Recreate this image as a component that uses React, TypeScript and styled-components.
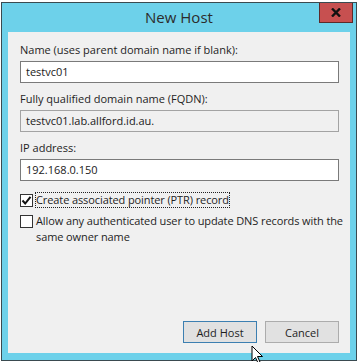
import React from 'react';
import styled, { createGlobalStyle } from 'styled-components';

const GlobalStyle = createGlobalStyle`
  html, body {
    margin: 0;
    padding: 0;
    background: #ffffff;
  }
  body {
    font-family: "Segoe UI", "Open Sans", "Noto Sans", sans-serif;
    font-size: 11px;
    color: #000;
  }
`;

const Page = styled.div`
  position: relative;
  width: 359px;
  height: 362px;
  overflow: hidden;
  padding: 2px 0 0 1px;
  box-sizing: border-box;
`;

const Window = styled.div`
  width: 356px;
  height: 359px;
  box-sizing: border-box;
  border: 1px solid #3a4a50;
  background: #6dd1ea;
  padding: 0 6px 7px;
  display: flex;
  flex-direction: column;
`;

const TitleBar = styled.div`
  height: 29px;
  display: grid;
  grid-template-columns: 1fr auto 1fr;
  align-items: start;
  margin: 0 -6px;
`;

const Title = styled.div`
  grid-column: 2;
  font-size: 15px;
  line-height: 29px;
  color: #2c2c2c;
`;

const CloseButton = styled.div`
  grid-column: 3;
  justify-self: end;
  margin-right: 3px;
  width: 34px;
  height: 20px;
  box-sizing: border-box;
  background: #c75050;
  border: 1px solid #5c2a2a;
  border-top: none;
  display: flex;
  align-items: center;
  justify-content: center;
`;

const Client = styled.div`
  flex: 1;
  background: #f0f0f0;
  padding: 10px 11px 10px 12px;
  display: flex;
  flex-direction: column;
`;

const Field = styled.div`
  display: flex;
  flex-direction: column;
  gap: 3px;
  margin-bottom: 8px;
`;

const Label = styled.div`
  line-height: 16px;
  color: #1e1e1e;
`;

const TextBox = styled.div<{ $disabled?: boolean }>`
  height: 22px;
  box-sizing: border-box;
  border: 1px solid ${p => (p.$disabled ? '#a3a3a3' : '#7a7a7a')};
  background: ${p => (p.$disabled ? '#f0f0f0' : '#ffffff')};
  padding: 0 5px;
  line-height: 20px;
  color: #1a1a1a;
`;

const CheckRow = styled.div`
  display: flex;
  align-items: flex-start;
  gap: 2px;
  margin-top: 3px;
  margin-right: -6px;
  & + & {
    margin-top: 5px;
  }
`;

const Box = styled.div`
  flex: none;
  width: 13px;
  height: 13px;
  box-sizing: border-box;
  border: 1px solid #333;
  background: #fff;
  margin-top: 2px;
  display: flex;
  align-items: center;
  justify-content: center;
`;

const CheckText = styled.div<{ $focused?: boolean }>`
  line-height: 16px;
  letter-spacing: -0.1px;
  color: #1e1e1e;
  padding: 0 1px;
  outline: ${p => (p.$focused ? '1px dotted #222' : 'none')};
  outline-offset: -1px;
`;

const ButtonRow = styled.div`
  margin-top: auto;
  display: flex;
  justify-content: flex-end;
  gap: 8px;
`;

const Button = styled.div<{ $default?: boolean }>`
  width: 74px;
  height: 22px;
  box-sizing: border-box;
  border: 1px solid ${p => (p.$default ? '#3c7fb1' : '#acacac')};
  background: #e1e1e1;
  display: flex;
  align-items: center;
  justify-content: center;
  color: #1e1e1e;
`;

const Cursor = styled.svg`
  position: absolute;
  left: 251px;
  top: 345px;
`;

const CheckMark = () => (
  <svg width="11" height="11" viewBox="0 0 11 11">
    <path d="M1.5 5.5 L4.2 8.5 L9.5 1.8" fill="none" stroke="#111" strokeWidth="2" />
  </svg>
);

export default function App() {
  return (
    <Page>
      <GlobalStyle />
      <Window>
        <TitleBar>
          <Title>New Host</Title>
          <CloseButton>
            <svg width="10" height="9" viewBox="0 0 10 9">
              <path d="M1 0.5 L9 8.5 M9 0.5 L1 8.5" stroke="#111" strokeWidth="2.4" />
            </svg>
          </CloseButton>
        </TitleBar>
        <Client>
          <Field>
            <Label>Name (uses parent domain name if blank):</Label>
            <TextBox>testvc01</TextBox>
          </Field>
          <Field>
            <Label>Fully qualified domain name (FQDN):</Label>
            <TextBox $disabled>testvc01.lab.allford.id.au.</TextBox>
          </Field>
          <Field>
            <Label>IP address:</Label>
            <TextBox>192.168.0.150</TextBox>
          </Field>
          <CheckRow>
            <Box>
              <CheckMark />
            </Box>
            <CheckText $focused>Create associated pointer (PTR) record</CheckText>
          </CheckRow>
          <CheckRow>
            <Box />
            <CheckText>
              Allow any authenticated user to update DNS records with the same owner name
            </CheckText>
          </CheckRow>
          <ButtonRow>
            <Button $default>Add Host</Button>
            <Button>Cancel</Button>
          </ButtonRow>
        </Client>
      </Window>
      <Cursor width="14" height="20" viewBox="0 0 14 20">
        <path d="M1 1 L1 16 L4.5 12.5 L7 18 L9 17 L6.5 11.5 L11.5 11.5 Z" fill="#fff" stroke="#000" strokeWidth="1" />
      </Cursor>
    </Page>
  );
}
